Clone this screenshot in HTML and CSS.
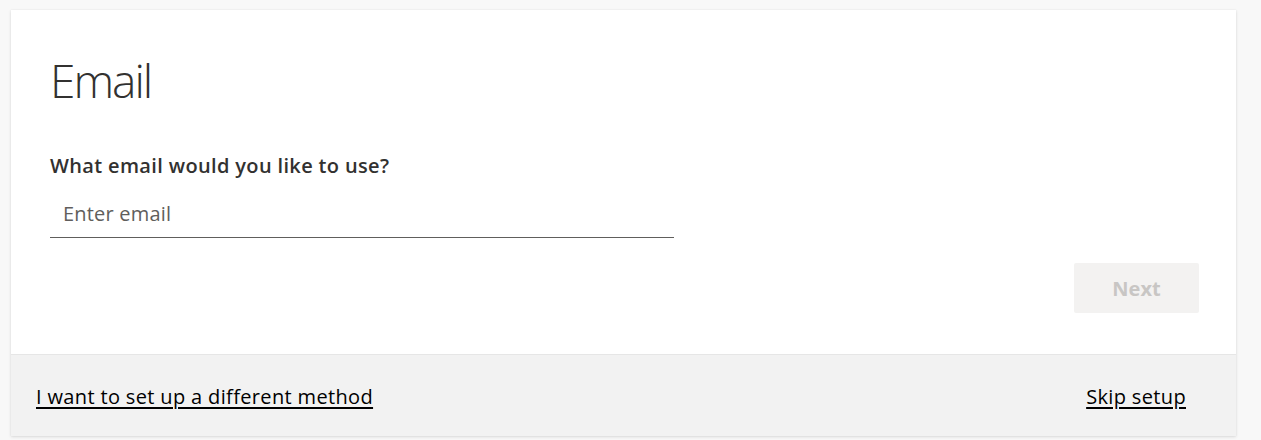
FILE: index.html
```html
<!DOCTYPE html>
<html lang="en">
<head>
<meta charset="utf-8">
<title>Email</title>
<link rel="stylesheet" href="styles.css">
</head>
<body>
<div class="card">
  <div class="main">
    <h1 class="title">Email</h1>
    <label class="label" for="email">What email would you like to use?</label>
    <div class="field">
      <input id="email" class="input" type="text" placeholder="Enter email">
    </div>
    <div class="actions">
      <button class="next" type="button" disabled>Next</button>
    </div>
  </div>
  <div class="footer">
    <a class="link" href="#">I want to set up a different method</a>
    <a class="link" href="#">Skip setup</a>
  </div>
</div>
</body>
</html>
```

FILE: styles.css
```css
html, body {
  margin: 0;
  padding: 0;
  background: #f8f8f8;
  font-family: "Open Sans", "Noto Sans", "Liberation Sans", sans-serif;
  color: #323130;
}
body {
  padding: 10px 25px 4px 11px;
  height: 440px;
  box-sizing: border-box;
  overflow: hidden;
}
.card {
  background: #ffffff;
  box-shadow: 0 1px 3px rgba(0,0,0,0.12), 0 0 1px rgba(0,0,0,0.08);
  display: flex;
  flex-direction: column;
  height: 426px;
}
.main {
  padding: 41px 37px 0 39px;
  display: flex;
  flex-direction: column;
  flex: 1;
}
.title {
  margin: 0;
  font-weight: 300;
  font-size: 46px;
  line-height: 58px;
  color: #323130;
  letter-spacing: -2px;
}
.label {
  margin-top: 44px;
  font-size: 20px;
  font-weight: 600;
  line-height: 26px;
  letter-spacing: 0.35px;
  color: #323130;
}
.field {
  margin-top: 12px;
  width: 623px;
  border-bottom: 1px solid #605e5c;
  padding-left: 1px;
}
.input {
  border: none;
  outline: none;
  background: transparent;
  width: 100%;
  box-sizing: border-box;
  padding: 10px 12px 10px;
  font-family: inherit;
  font-size: 20px;
  line-height: 26px;
  letter-spacing: 0.2px;
  color: #323130;
}
.input::placeholder {
  color: #605e5c;
}
.actions {
  display: flex;
  justify-content: flex-end;
  margin-top: 25px;
}
.next {
  width: 125px;
  height: 50px;
  border: none;
  border-radius: 2px;
  background: #f3f2f1;
  color: #c8c6c4;
  font-family: inherit;
  font-size: 20px;
  font-weight: 700;
  letter-spacing: 0;
}
.footer {
  height: 82px;
  box-sizing: border-box;
  background: #f2f2f2;
  border-top: 1px solid #e6e6e6;
  display: flex;
  align-items: center;
  justify-content: space-between;
  padding: 2px 50px 0 25px;
}
.link {
  color: #000000;
  font-size: 20px;
  letter-spacing: 0.35px;
  text-decoration: underline;
  text-underline-offset: 3px;
}
```
